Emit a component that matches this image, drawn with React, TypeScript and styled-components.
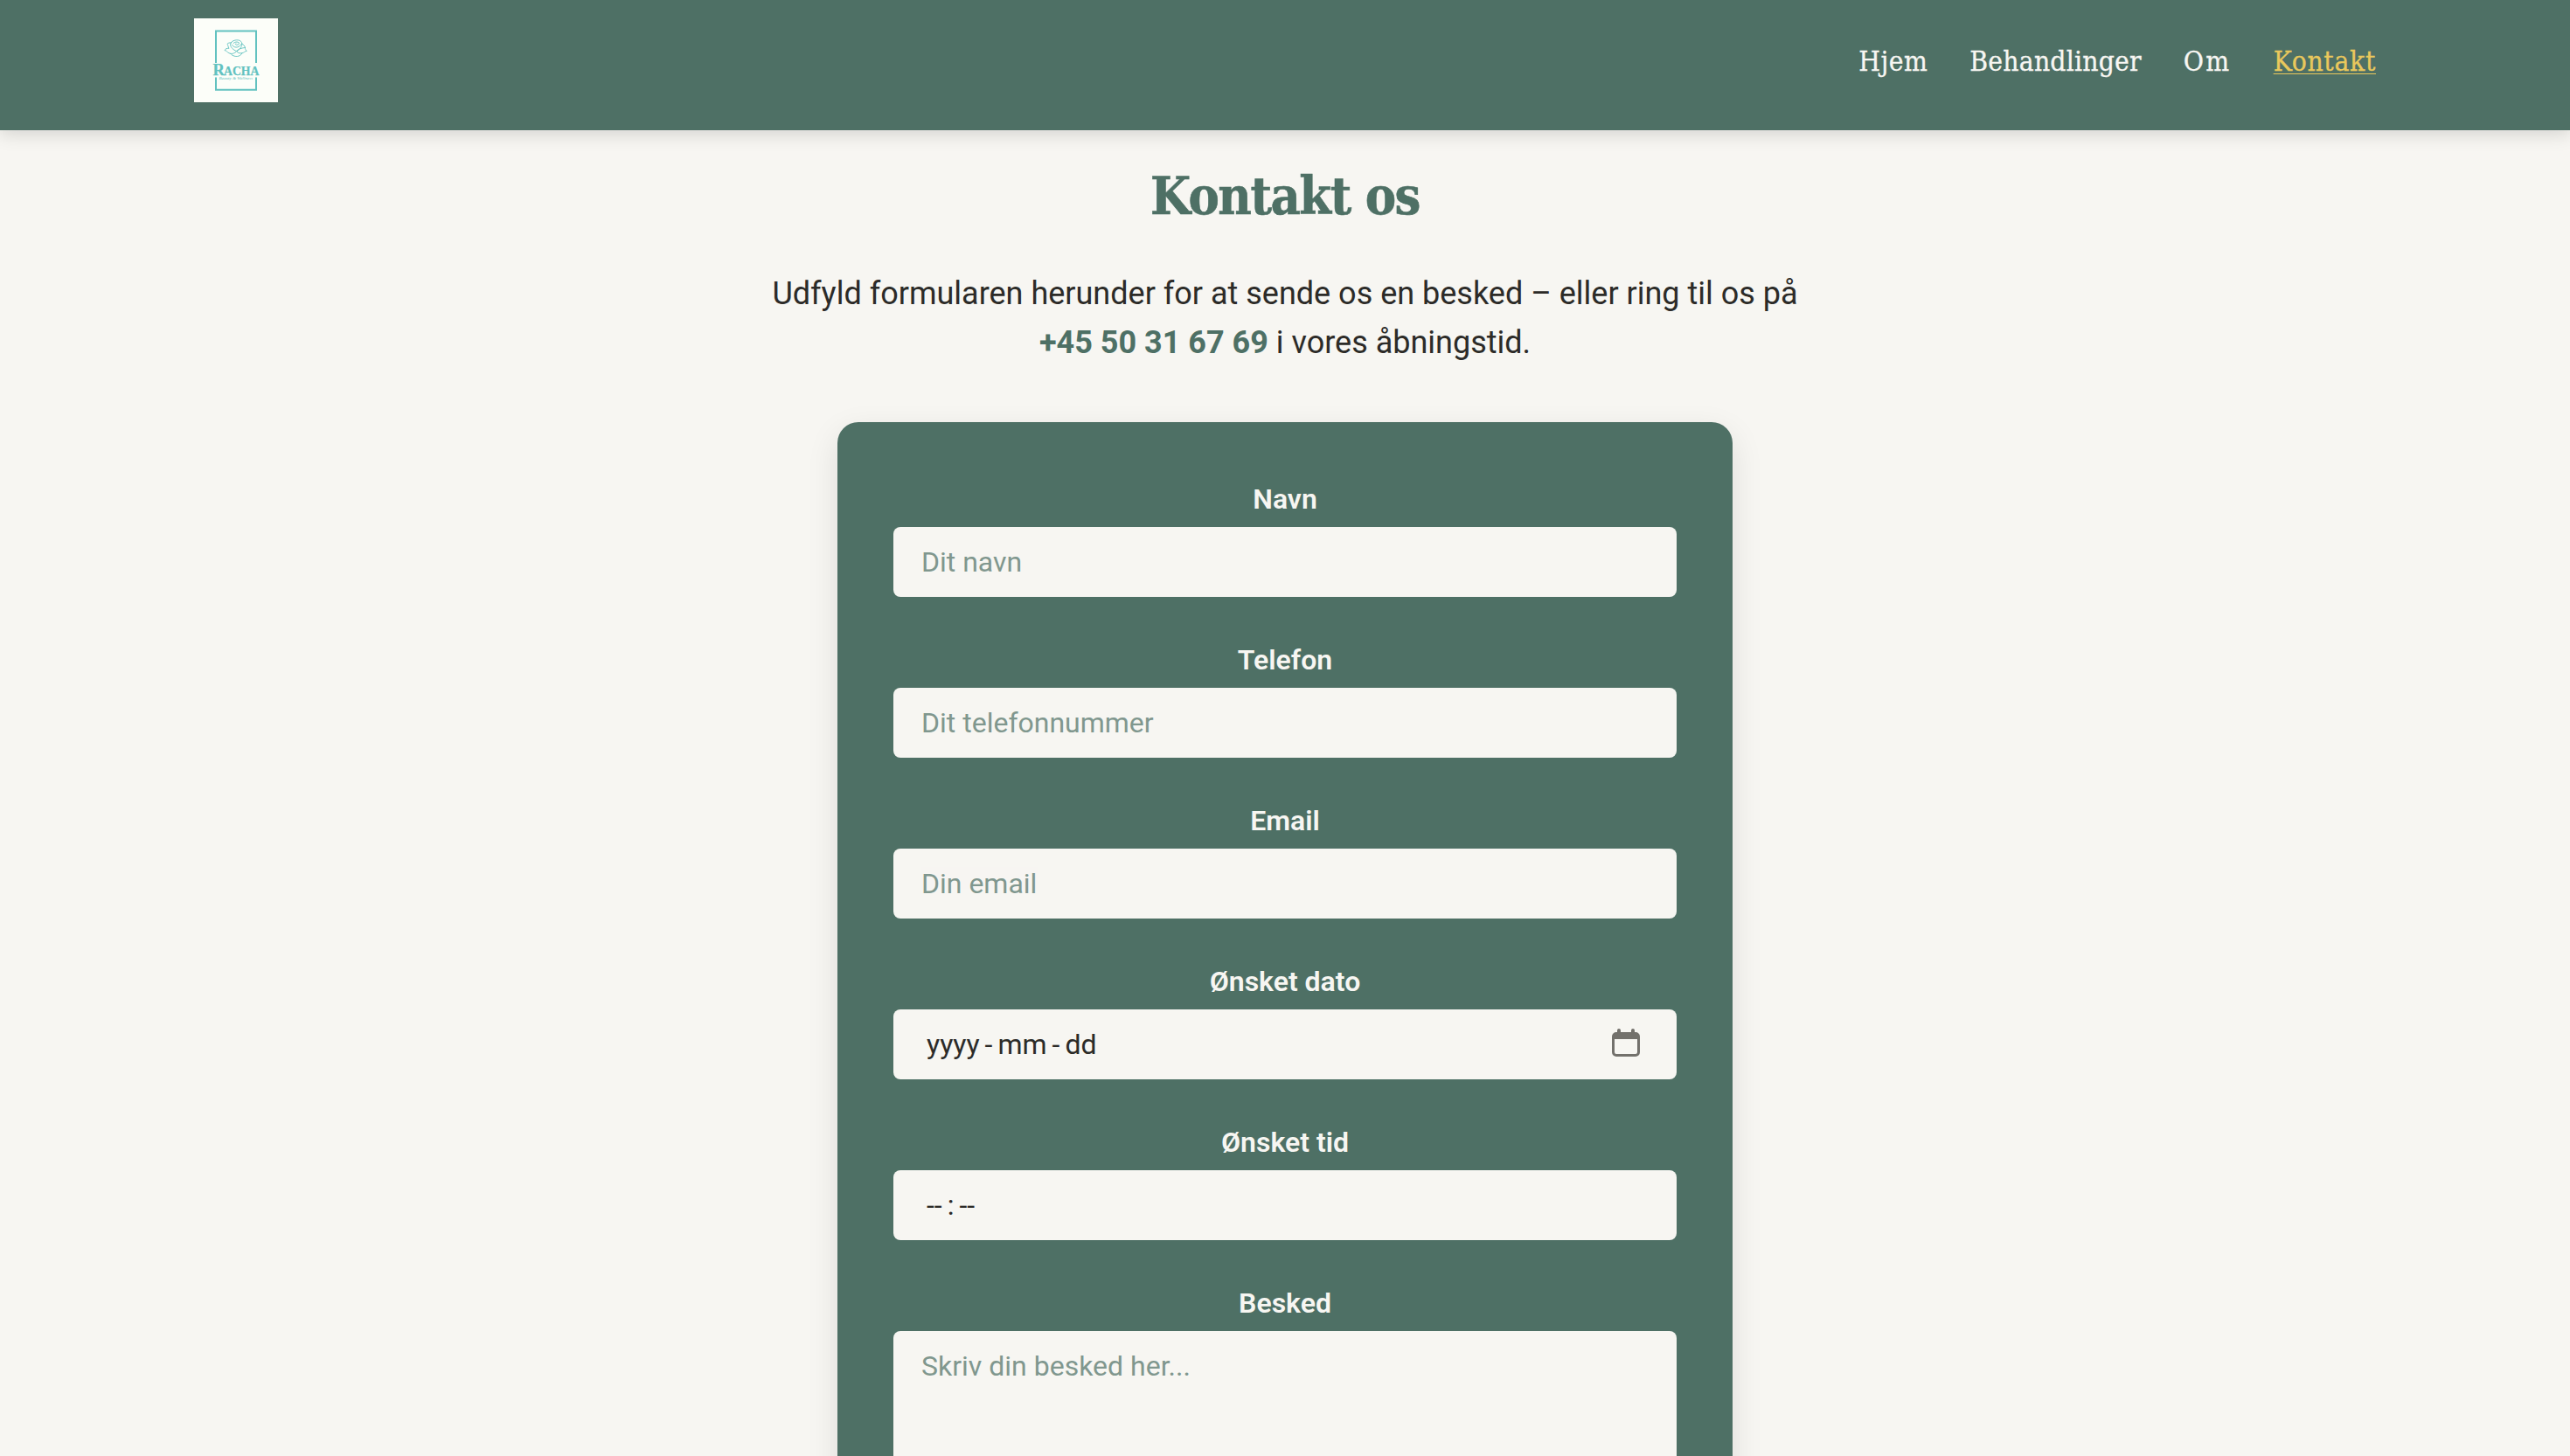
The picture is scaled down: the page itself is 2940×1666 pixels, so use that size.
import React from "react";
import styled, { createGlobalStyle } from "styled-components";

const green = "#4e7065";
const cream = "#f7f6f2";
const ink = "#2c2b28";
const gold = "#e9c85c";
const sans = `Roboto, "Liberation Sans", sans-serif`;
const serif = `"DejaVu Serif Condensed", "DejaVu Serif", serif`;

const GlobalStyle = createGlobalStyle`
  *, *::before, *::after { box-sizing: border-box; }
  html, body { margin: 0; padding: 0; background: ${cream}; }
  body { font-family: ${sans}; color: ${ink}; }
`;

const Page = styled.div`
  height: 100vh;
  overflow: hidden;
  background: ${cream};
`;

const Header = styled.header`
  display: flex;
  justify-content: space-between;
  align-items: flex-start;
  height: 149px;
  padding: 21px 222px 0;
  background: ${green};
  box-shadow: 0 4px 20px rgba(0, 0, 0, 0.15);
`;

const LogoMark = styled.svg`
  display: block;
  width: 96px;
  height: 96px;
`;

const Nav = styled.nav`
  display: flex;
  gap: 48px;
  padding-top: 25px;
`;

const NavLink = styled.a<{ $active?: boolean; $tracking: number }>`
  font: 400 31.5px/48px ${serif};
  font-stretch: condensed;
  letter-spacing: ${(p) => p.$tracking}px;
  color: ${(p) => (p.$active ? gold : cream)};
  -webkit-text-stroke: 0.3px currentColor;
  text-decoration: ${(p) => (p.$active ? "underline" : "none")};
  text-decoration-thickness: 1px;
  text-underline-offset: 3px;
`;

const Main = styled.main`
  display: flex;
  flex-direction: column;
  align-items: center;
`;

const Title = styled.h1`
  margin: 36px 0 0;
  font: 700 59px/80px ${serif};
  font-stretch: condensed;
  letter-spacing: -1.5px;
  color: ${green};
  -webkit-text-stroke: 0.6px ${green};
`;

const Intro = styled.p`
  width: 1240px;
  margin: 43px 0 0;
  font-size: 36px;
  line-height: 56px;
  text-align: center;
`;

const Phone = styled.strong`
  font-weight: 700;
  color: ${green};
`;

const Form = styled.form`
  display: flex;
  flex-direction: column;
  gap: 48px;
  width: 1024px;
  margin-top: 63px;
  padding: 64px;
  border-radius: 24px;
  background: ${green};
  box-shadow: 0 12px 36px rgba(0, 0, 0, 0.1);
`;

const Field = styled.div`
  display: flex;
  flex-direction: column;
  gap: 8px;
`;

const Label = styled.label`
  font-size: 32px;
  font-weight: 600;
  line-height: 48px;
  text-align: center;
  color: ${cream};
`;

const Control = styled.input`
  width: 100%;
  height: 80px;
  padding: 0 32px;
  border: 0;
  border-radius: 8px;
  outline: none;
  background: ${cream};
  font: 400 32px/48px ${sans};
  color: ${ink};
  &::placeholder { color: ${green}; opacity: 0.7; }
`;

const MessageBox = styled(Control).attrs({ as: "textarea" })`
  display: block;
  height: 240px;
  padding: 16px 32px;
  resize: none;
`;

const Picker = styled.div`
  display: flex;
  align-items: center;
  justify-content: space-between;
  height: 80px;
  padding: 0 42px 0 38px;
  border-radius: 8px;
  background: ${cream};
`;

const Segments = styled.div`
  display: flex;
  gap: 6px;
  font-size: 32px;
  line-height: 48px;
`;

const CalendarGlyph = styled.svg`
  display: block;
  width: 32px;
  height: 32px;
  margin-top: -4px;
`;

function Logo() {
  const teal = "#62c2c0";
  return (
    <LogoMark viewBox="0 0 96 96" role="img" aria-label="Racha">
      <rect width="96" height="96" fill="#fcfef9" />
      <g fill="none" stroke={teal} strokeWidth="2">
        <path d="M25 51V14.500H71V51" />
        <path d="M25 67.500V81.800H71V67.500" />
      </g>
      <g fill="none" stroke={teal} strokeWidth="0.9" strokeLinecap="round" strokeLinejoin="round">
        <path d="M42.500 27.500c2-2.200 5-3 8-2.600 2.300.3 4 1.800 4.300 4-.1 3.500-2 6.500-6 8.600-4-1.300-7-4.300-7.200-7.400 0-1 .3-1.900.9-2.600z" />
        <path d="M45 28.500c1.300-1.800 4.800-2 6.300-.7.700 1.400-.7 2.600-2.500 2.600-1.500 0-2-1.200-.8-1.800" />
        <path d="M43.500 30.500c1.500 2.300 4 3 6.300 2.400 2-.6 3.800-2.200 4.800-4" />
        <path d="M42.300 28c-1.800-.4-3.300.2-4.300 1.300 1 1.500.8 3.200 2 5-2.300-.3-4.300.6-5 2.300 2.300.3 3 2.200 5 3.200 3 1.300 6.300.6 8.800-2.300" />
        <path d="M54.800 29.300c2 .7 3.200 2.300 3.700 4.200-.3 1.600.5 2.600 1.800 3.800-2.300.3-3 2-5.300 2.500-3 .6-5.800-.6-6.200-2.300 2.200-3 5.700-3.500 9.700-4" />
        <path d="M41.500 40.200c1.800 2.400 4.800 3.500 7.800 3.300 2.200-.2 4.500-1.200 5.700-3.700" />
      </g>
      <text y="65" fill={teal} stroke={teal} strokeWidth="0.25" fontFamily="Liberation Serif, serif" fontWeight="700">
        <tspan x="21.500" fontSize="18.500">R</tspan>
        <tspan x="34" fontSize="15.500" textLength="40.500" lengthAdjust="spacingAndGlyphs">ACHA</tspan>
      </text>
      <text x="28.500" y="70" fill={teal} fontFamily="Liberation Serif, serif" fontStyle="italic" fontSize="5" textLength="38.500" lengthAdjust="spacingAndGlyphs">Beauty &amp; Wellness</text>
    </LogoMark>
  );
}

function CalendarIcon() {
  return (
    <CalendarGlyph viewBox="0 0 32 32" aria-hidden="true">
      <path
        fill="#73716c"
        fillRule="evenodd"
        d="M6 2a2 2 0 0 1 4 0v2h12V2a2 2 0 0 1 4 0v2h1a5 5 0 0 1 5 5v18a5 5 0 0 1-5 5H5a5 5 0 0 1-5-5V9a5 5 0 0 1 5-5h1zM3 12v15a2 2 0 0 0 2 2h22a2 2 0 0 0 2-2V12z"
      />
    </CalendarGlyph>
  );
}

const links = [
  { label: "Hjem", tracking: 0.5 },
  { label: "Behandlinger", tracking: 0.2 },
  { label: "Om", tracking: 2.4 },
  { label: "Kontakt", tracking: 0.7, active: true },
];

const textFields = [
  { id: "navn", label: "Navn", placeholder: "Dit navn" },
  { id: "telefon", label: "Telefon", placeholder: "Dit telefonnummer" },
  { id: "email", label: "Email", placeholder: "Din email" },
];

export default function App() {
  return (
    <Page>
      <GlobalStyle />
      <Header>
        <Logo />
        <Nav>
          {links.map((l) => (
            <NavLink key={l.label} $active={l.active} $tracking={l.tracking}>
              {l.label}
            </NavLink>
          ))}
        </Nav>
      </Header>
      <Main>
        <Title>Kontakt os</Title>
        <Intro>
          Udfyld formularen herunder for at sende os en besked – eller ring til os på{" "}
          <Phone>+45 50 31 67 69</Phone> i vores åbningstid.
        </Intro>
        <Form>
          {textFields.map((f) => (
            <Field key={f.id}>
              <Label htmlFor={f.id}>{f.label}</Label>
              <Control id={f.id} placeholder={f.placeholder} />
            </Field>
          ))}
          <Field>
            <Label>Ønsket dato</Label>
            <Picker>
              <Segments>
                <span>yyyy</span>
                <span>-</span>
                <span>mm</span>
                <span>-</span>
                <span>dd</span>
              </Segments>
              <CalendarIcon />
            </Picker>
          </Field>
          <Field>
            <Label>Ønsket tid</Label>
            <Picker>
              <Segments>
                <span>--</span>
                <span>:</span>
                <span>--</span>
              </Segments>
            </Picker>
          </Field>
          <Field>
            <Label htmlFor="besked">Besked</Label>
            <MessageBox id="besked" placeholder="Skriv din besked her..." />
          </Field>
        </Form>
      </Main>
    </Page>
  );
}
